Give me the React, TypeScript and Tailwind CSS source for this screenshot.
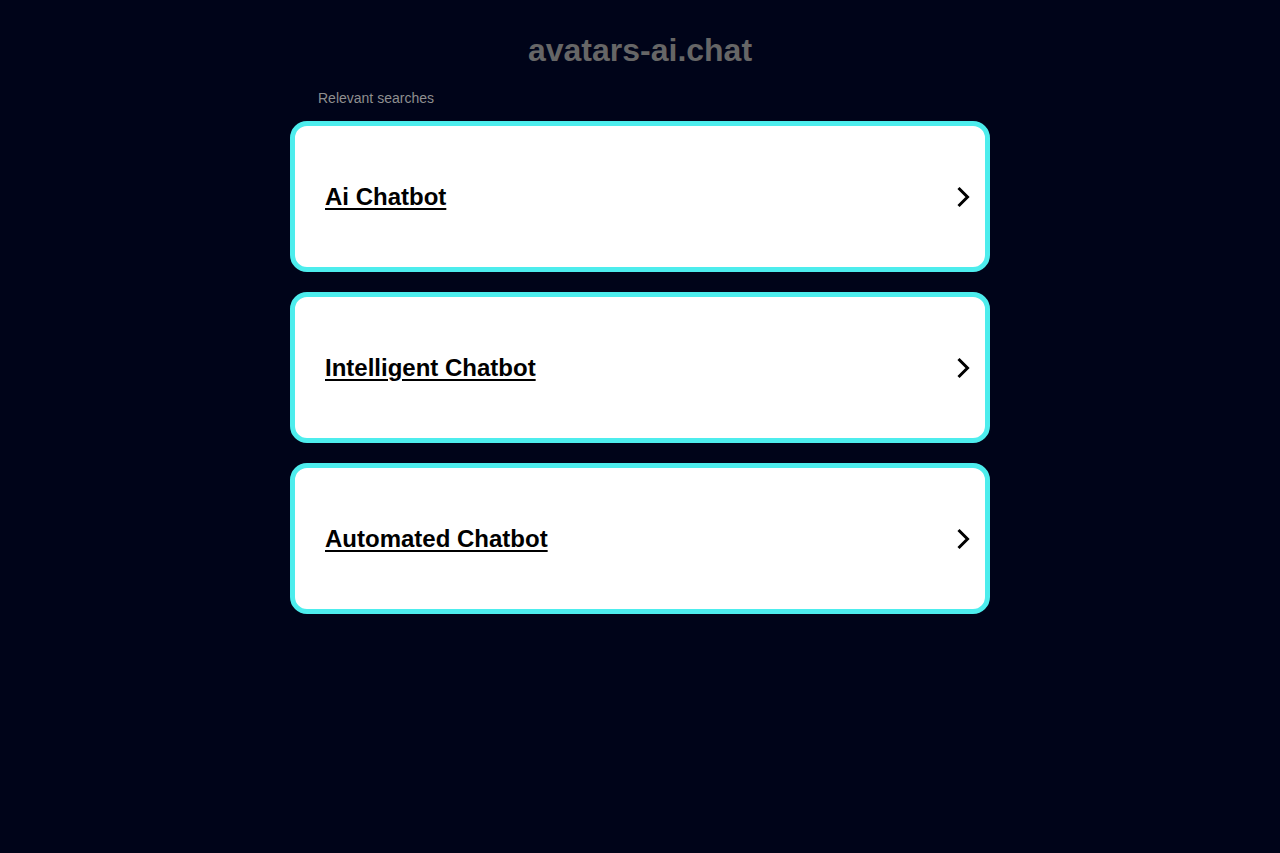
const searches = ['Ai Chatbot', 'Intelligent Chatbot', 'Automated Chatbot']

function Chevron() {
  return (
    <svg width="14" height="22" viewBox="0 0 14 22" fill="none" className="shrink-0">
      <path d="M2.5 2l9 9-9 9" stroke="#000" strokeWidth="3" strokeLinecap="butt" strokeLinejoin="miter" />
    </svg>
  )
}

export default function App() {
  return (
    <div className="min-h-[853px] bg-[#000419]" style={{ fontFamily: "Arial, 'Liberation Sans', sans-serif" }}>
      <div className="w-[700px] mx-auto pt-[29px]">
        <h1 className="text-center text-[32px] leading-[42px] font-bold text-[#666666]">avatars-ai.chat</h1>

        <div className="mt-[19px] pl-[28px] text-[14px] leading-[16px] text-[#8f8f8f]">Relevant searches</div>

        <div className="mt-[15px] flex flex-col gap-[20px]">
          {searches.map((s) => (
            <a
              key={s}
              href="#"
              className="flex items-center justify-between h-[151px] bg-white border-[5px] border-[#4deded] rounded-[17px] pl-[30px] pr-[15px]"
            >
              <span className="text-[24px] leading-[28px] font-bold text-black underline decoration-[2px] underline-offset-[3px]">{s}</span>
              <Chevron />
            </a>
          ))}
        </div>
      </div>
    </div>
  )
}
